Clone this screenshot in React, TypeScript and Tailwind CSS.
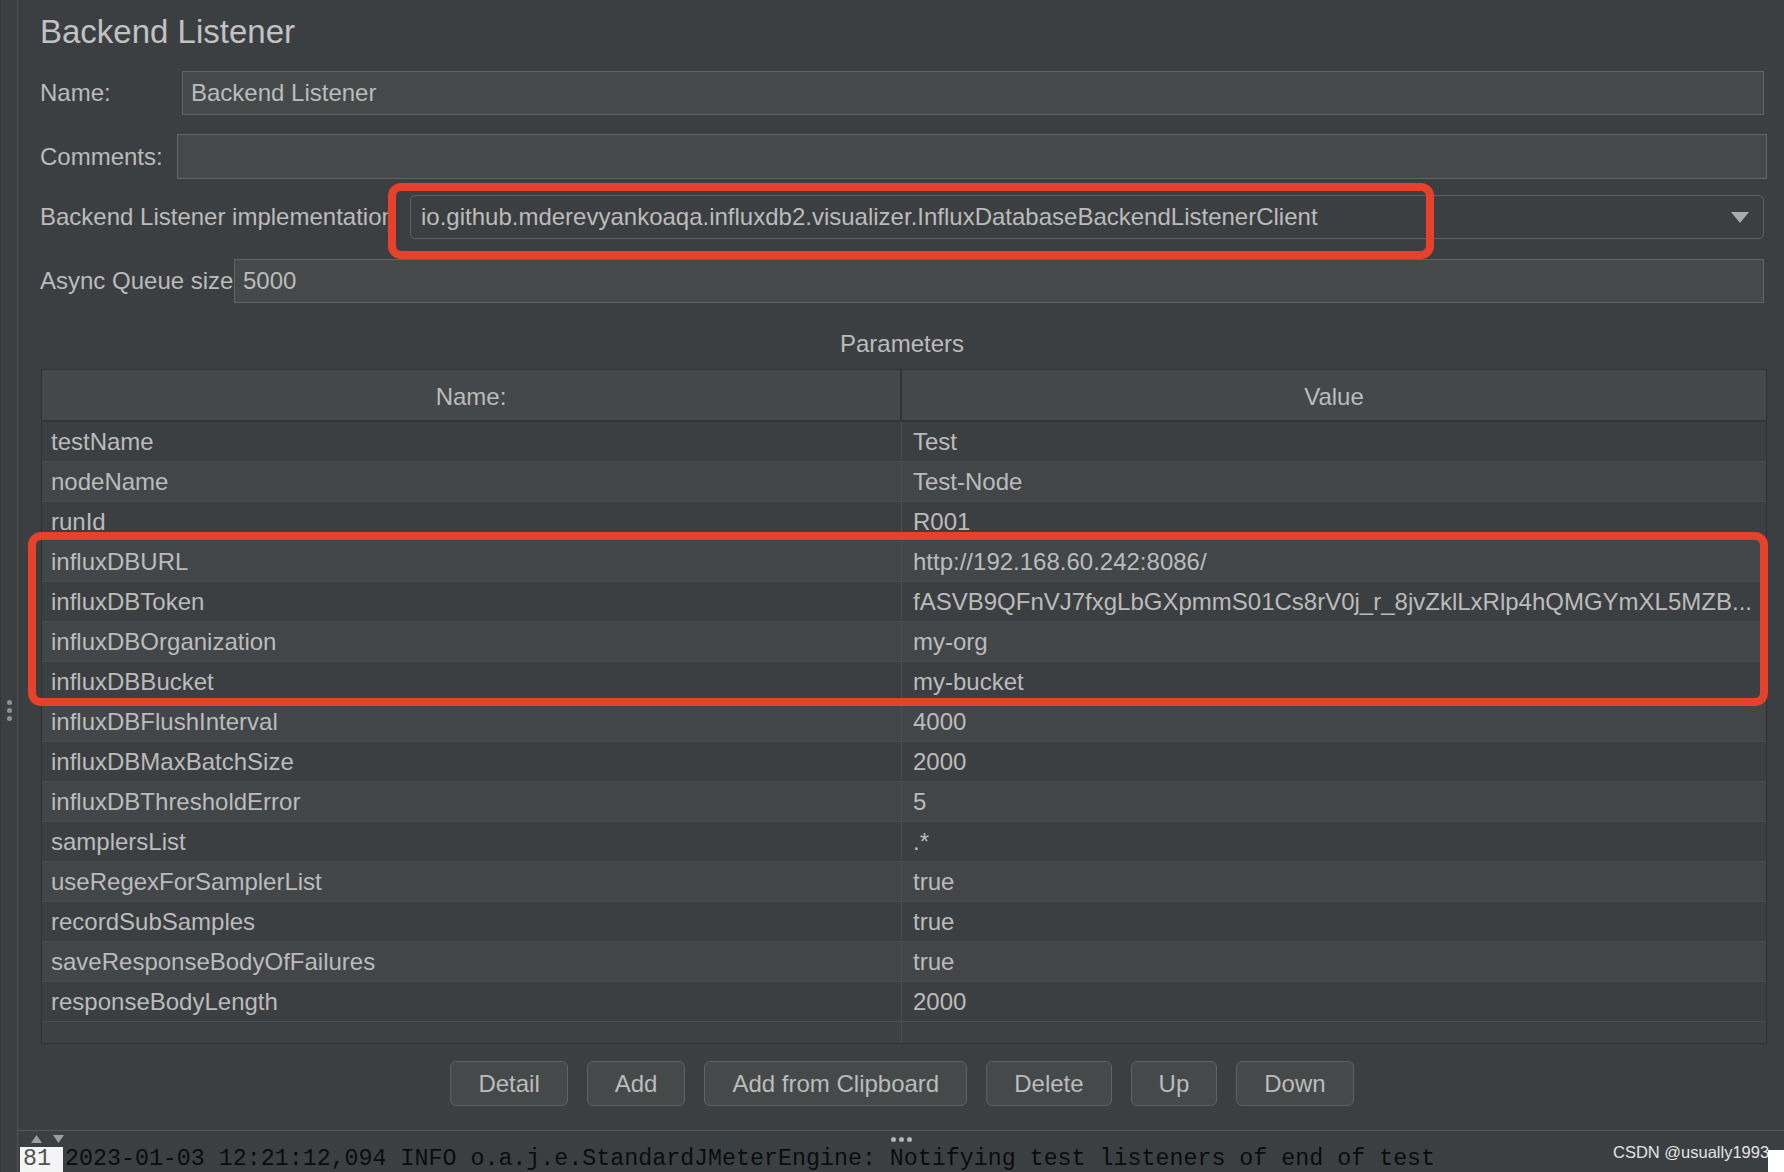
const params = [
  ["testName", "Test"],
  ["nodeName", "Test-Node"],
  ["runId", "R001"],
  ["influxDBURL", "http://192.168.60.242:8086/"],
  ["influxDBToken", "fASVB9QFnVJ7fxgLbGXpmmS01Cs8rV0j_r_8jvZklLxRlp4hQMGYmXL5MZB..."],
  ["influxDBOrganization", "my-org"],
  ["influxDBBucket", "my-bucket"],
  ["influxDBFlushInterval", "4000"],
  ["influxDBMaxBatchSize", "2000"],
  ["influxDBThresholdError", "5"],
  ["samplersList", ".*"],
  ["useRegexForSamplerList", "true"],
  ["recordSubSamples", "true"],
  ["saveResponseBodyOfFailures", "true"],
  ["responseBodyLength", "2000"],
];

const buttons = ["Detail", "Add", "Add from Clipboard", "Delete", "Up", "Down"];

const Field = ({ label, labelW, value, h = "h-[44px]" }: { label: string; labelW: string; value?: string; h?: string }) => (
  <div className={`flex items-center ${h}`}>
    <div className={`${labelW} shrink-0 whitespace-nowrap`}>{label}</div>
    <div className="flex-1 h-full flex items-center px-[8px] bg-[#45494a] border border-[#646464]">
      {value}
    </div>
  </div>
);

export default function App() {
  return (
    <div className="relative flex w-[1784px] h-[1172px] overflow-hidden bg-[#3c3f41] text-[#bbbbbb] text-[24px] font-['Liberation_Sans',Arial,sans-serif]">
      {/* left splitter strip */}
      <div className="w-[18px] shrink-0 border-r border-[#515355] border-l border-l-[#35373a] flex flex-col items-center pt-[700px] gap-[3px]">
        <span className="w-[5px] h-[5px] rounded-full bg-[#8e9092]" />
        <span className="w-[5px] h-[5px] rounded-full bg-[#8e9092]" />
        <span className="w-[5px] h-[5px] rounded-full bg-[#8e9092]" />
      </div>

      <div className="flex-1 min-w-0 flex flex-col">
        <div className="flex-1 flex flex-col pl-[22px] pr-[20px]">
          <div className="pt-[12px] h-[52px] text-[33px] leading-[40px] text-[#c2c2c2]">Backend Listener</div>

          <div className="mt-[19px]">
            <Field label="Name:" labelW="w-[142px]" value="Backend Listener" />
          </div>
          <div className="mt-[19px] mr-[-3px]">
            <Field label="Comments:" labelW="w-[137px]" h="h-[45px]" />
          </div>

          <div className="mt-[16px] flex items-center h-[44px]">
            <div className="w-[350px] shrink-0 overflow-hidden whitespace-nowrap">Backend Listener implementation</div>
            <div className="ml-[20px] flex-1 h-full flex items-center justify-between pl-[10px] pr-[14px] border border-[#5e6163] rounded-[5px]">
              <span className="whitespace-nowrap">io.github.mderevyankoaqa.influxdb2.visualizer.InfluxDatabaseBackendListenerClient</span>
              <svg width="18" height="11" viewBox="0 0 18 11">
                <polygon points="0,0 18,0 9,11" fill="#a9abad" />
              </svg>
            </div>
          </div>

          <div className="mt-[20px]">
            <Field label="Async Queue size" labelW="w-[194px]" value="5000" />
          </div>

          <div className="mt-[26px] h-[30px] leading-[30px] text-center">Parameters</div>

          <div className="mt-[10px] ml-[1px] mr-[-3px] h-[675px] flex flex-col border border-[#2e3032] bg-[#3e4143]">
            <div className="h-[52px] shrink-0 flex border-b-2 border-[#323436] bg-[#45484a]">
              <div className="w-[860px] shrink-0 flex items-center justify-center pt-[3px] border-r-2 border-[#323436]">Name:</div>
              <div className="flex-1 flex items-center justify-center pt-[3px]">Value</div>
            </div>
            {params.map(([name, value], i) => (
              <div
                key={name}
                className={`h-[40px] shrink-0 flex border-b border-[#4a4d4f] ${i % 2 === 1 ? "bg-[#434648]" : "bg-[#3c3f41]"}`}
              >
                <div className="w-[860px] shrink-0 flex items-center pl-[9px] border-r border-[#4a4d4f] whitespace-nowrap">{name}</div>
                <div className="flex-1 min-w-0 flex items-center pl-[11px] pr-[8px]">
                  <span className="truncate">{value}</span>
                </div>
              </div>
            ))}
            <div className="flex-1 flex">
              <div className="w-[860px] shrink-0 border-r border-[#4a4d4f]" />
            </div>
          </div>

          <div className="mt-[17px] flex justify-center gap-[19px]">
            {buttons.map((b) => (
              <div
                key={b}
                className="h-[45px] px-[27px] flex items-center rounded-[6px] border border-[#5e6163] bg-[#45494a] whitespace-nowrap"
              >
                {b}
              </div>
            ))}
          </div>
        </div>

        <div className="h-[42px] shrink-0 border-t border-[#555759] flex flex-col">
          <div className="h-[16px] grid grid-cols-[1fr_auto_1fr] items-center">
            <div className="flex items-center gap-[11px] pl-[13px]">
              <svg width="11" height="8" viewBox="0 0 11 8"><polygon points="0,8 11,8 5.5,0" fill="#9b9d9f" /></svg>
              <svg width="11" height="8" viewBox="0 0 11 8"><polygon points="0,0 11,0 5.5,8" fill="#9b9d9f" /></svg>
            </div>
            <div className="flex gap-[3px]">
              <span className="w-[5px] h-[5px] rounded-full bg-[#b0b2b4]" />
              <span className="w-[5px] h-[5px] rounded-full bg-[#b0b2b4]" />
              <span className="w-[5px] h-[5px] rounded-full bg-[#b0b2b4]" />
            </div>
            <div />
          </div>
          <div className="flex-1 flex items-start font-['Liberation_Mono',monospace] text-[23.3px] leading-[25px]">
            <div className="ml-[2px] w-[43px] h-full bg-[#f4f4f4] text-[#505050] pl-[3px]">81</div>
            <div className="ml-[2px] text-[#0c0c0c] whitespace-nowrap">
              2023-01-03 12:21:12,094 INFO o.a.j.e.StandardJMeterEngine: Notifying test listeners of end of test
            </div>
          </div>
        </div>
      </div>

      {/* annotation overlays */}
      <div className="absolute left-[388px] top-[183px] w-[1046px] h-[76px] border-[8px] border-[#e6412b] rounded-[13px] pointer-events-none" />
      <div className="absolute left-[28px] top-[532px] w-[1740px] h-[174px] border-[8px] border-[#e6412b] rounded-[13px] pointer-events-none" />
      <div className="absolute left-[1613px] top-[1141px] text-[16.5px] leading-[22px] text-[#e4e4e4] whitespace-nowrap">CSDN @usually1993</div>
      <div className="absolute left-[1768px] top-[1150px] w-[16px] h-[22px] bg-white" />
    </div>
  );
}
